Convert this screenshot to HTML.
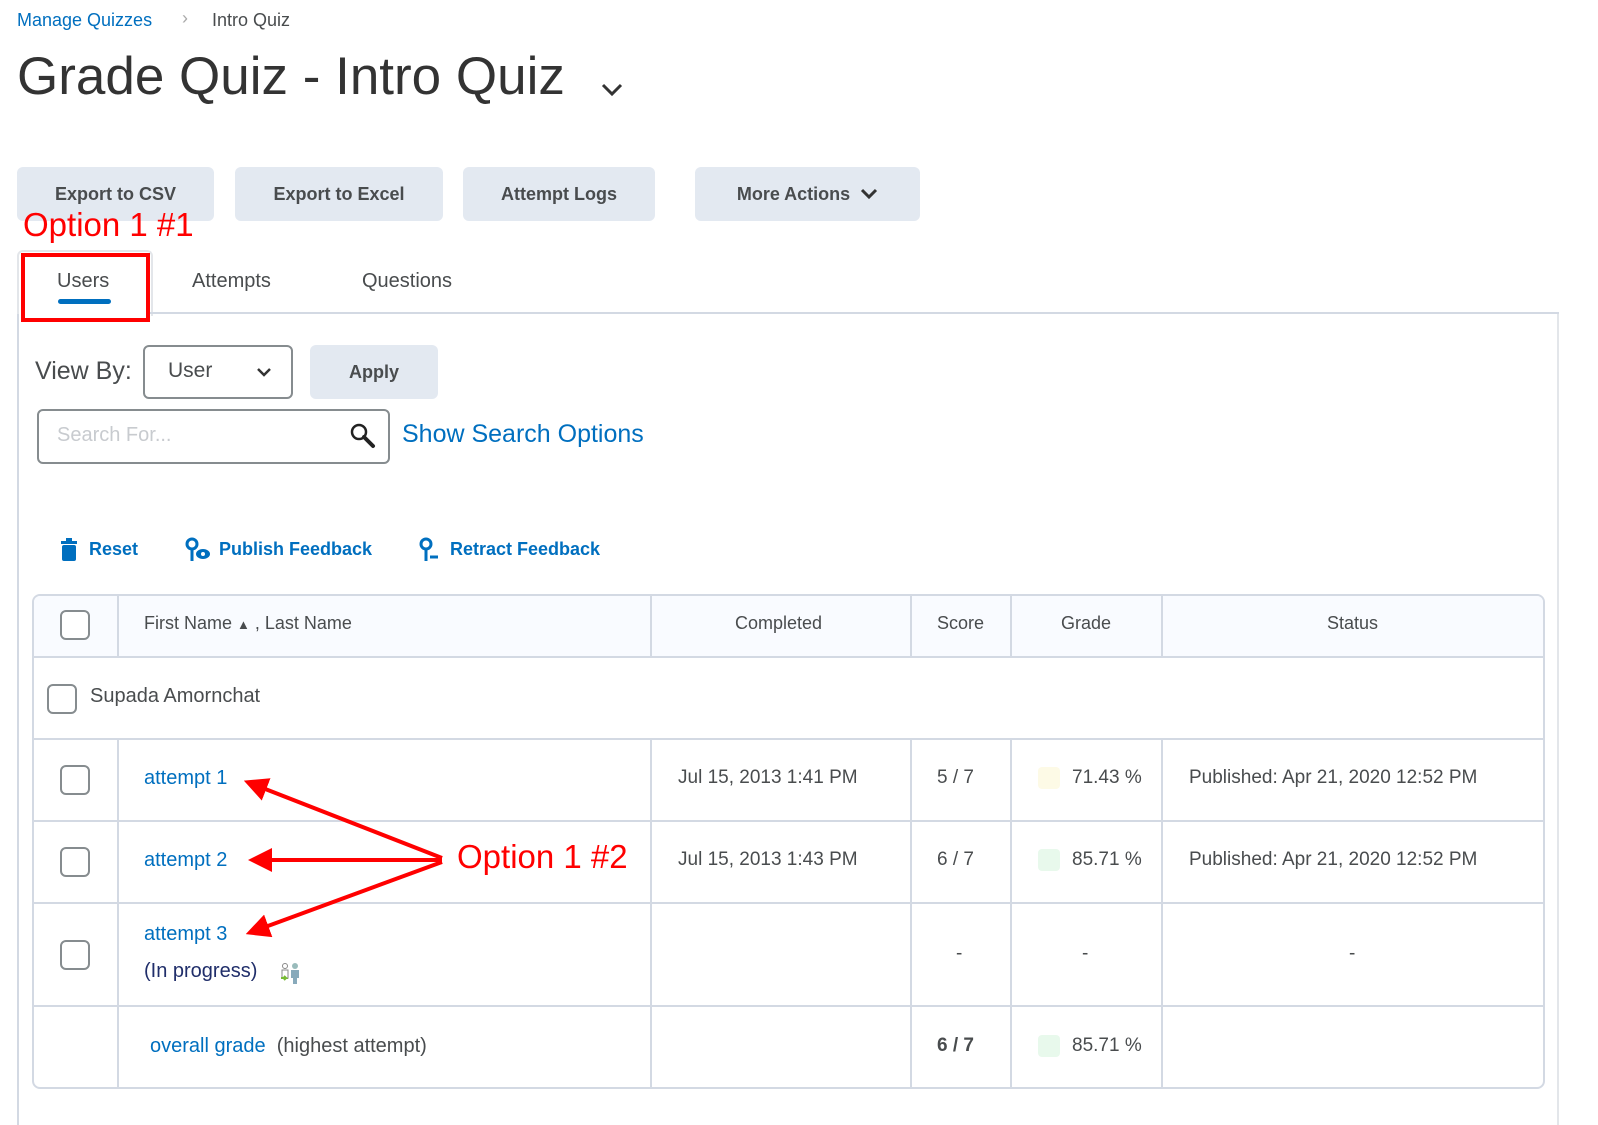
<!DOCTYPE html>
<html><head><meta charset="utf-8"><style>
body{margin:0;width:1598px;height:1125px;background:#fff;font-family:"Liberation Sans",sans-serif;color:#494c4e;position:relative;overflow:hidden}
.a{position:absolute;white-space:nowrap}
.btn{position:absolute;background:#e3e9f1;border-radius:6px;height:54px;top:167px;font-size:18px;font-weight:bold;color:#494c4e;display:flex;align-items:center;justify-content:center}
.link{color:#006fbf}
.hl{position:absolute;height:2px;background:#d3d9e3;left:32px;width:1513px}
.vl{position:absolute;width:2px;background:#d3d9e3}
.cb{position:absolute;width:30px;height:30px;border:2px solid #868c8f;border-radius:6px;box-sizing:border-box;background:#fff}
.t{position:absolute;font-size:19px;white-space:nowrap}
.sw{position:absolute;width:22px;height:22px;border-radius:4px}
</style></head><body>
<div class="a link" style="left:17px;top:10px;font-size:18px">Manage Quizzes</div>
<div class="a" style="left:182px;top:8px;font-size:18px;color:#aaa">›</div>
<div class="a" style="left:212px;top:10px;font-size:18px">Intro Quiz</div>
<div class="a" style="left:17px;top:46px;font-size:53px;color:#333">Grade Quiz - Intro Quiz</div>
<svg class="a" style="left:600px;top:82px" width="24" height="16"><path d="M3 3l9 9 9-9" fill="none" stroke="#333" stroke-width="3"/></svg>
<div class="btn" style="left:17px;width:197px">Export to CSV</div>
<div class="btn" style="left:235px;width:208px">Export to Excel</div>
<div class="btn" style="left:463px;width:192px">Attempt Logs</div>
<div class="btn" style="left:695px;width:225px">More Actions <svg style="margin-left:10px" width="18" height="12"><path d="M2 2l7 7 7-7" fill="none" stroke="#333" stroke-width="3"/></svg></div>
<div class="a" style="left:23px;top:206px;font-size:33px;color:#f00">Option 1 #1</div>
<div style="position:absolute;left:17px;top:250px;width:132px;height:64px;border:2px solid #e3e6ea;border-bottom:none;border-radius:6px 6px 0 0;background:#fff"></div>
<div style="position:absolute;left:148px;top:312px;width:1411px;height:2px;background:#d3d9e3"></div>
<div style="position:absolute;left:17px;top:314px;width:2px;height:811px;background:#d3d9e3"></div>
<div style="position:absolute;left:1557px;top:314px;width:2px;height:811px;background:#e3e6ea"></div>
<div style="position:absolute;left:21px;top:253px;width:121px;height:61px;border:4px solid #f00"></div>
<div class="a" style="left:57px;top:270px;font-size:20px">Users</div>
<div style="position:absolute;left:58px;top:299px;width:53px;height:5px;border-radius:3px;background:#006fbf"></div>
<div class="a" style="left:192px;top:270px;font-size:20px">Attempts</div>
<div class="a" style="left:362px;top:270px;font-size:20px">Questions</div>
<div class="a" style="left:35px;top:357px;font-size:25px">View By:</div>
<div style="position:absolute;left:143px;top:345px;width:150px;height:54px;border:2px solid #868c8f;border-radius:6px;box-sizing:border-box"></div>
<div class="a" style="left:168px;top:359px;font-size:21px">User</div>
<svg class="a" style="left:256px;top:367px" width="16" height="11"><path d="M2 2l6 6 6-6" fill="none" stroke="#333" stroke-width="2.5"/></svg>
<div class="btn" style="left:310px;top:345px;width:128px;height:54px">Apply</div>
<div style="position:absolute;left:37px;top:409px;width:353px;height:55px;border:2px solid #868c8f;border-radius:6px;box-sizing:border-box"></div>
<div class="a" style="left:57px;top:424px;font-size:20px;color:#c8cbcf">Search For...</div>
<svg class="a" style="left:349px;top:422px" width="28" height="28"><circle cx="10" cy="10" r="7" fill="none" stroke="#222" stroke-width="2.5"/><path d="M15 15l9 9" stroke="#222" stroke-width="4" stroke-linecap="round"/></svg>
<div class="a link" style="left:402px;top:420px;font-size:25px">Show Search Options</div>
<svg class="a" style="left:60px;top:537px" width="20" height="26"><rect x="1" y="4" width="16" height="3" fill="#006fbf"/><rect x="6" y="1" width="6" height="4" fill="#006fbf"/><rect x="2" y="8" width="14" height="16" rx="2" fill="#006fbf"/></svg>
<div class="a link" style="left:89px;top:539px;font-size:18px;font-weight:bold">Reset</div>
<svg class="a" style="left:185px;top:537px" width="28" height="26"><circle cx="7" cy="7" r="5" fill="none" stroke="#006fbf" stroke-width="3"/><path d="M7 12v12" stroke="#006fbf" stroke-width="3"/><ellipse cx="18" cy="17" rx="7" ry="5" fill="#006fbf"/><circle cx="18" cy="17" r="2" fill="#fff"/></svg>
<div class="a link" style="left:219px;top:539px;font-size:18px;font-weight:bold">Publish Feedback</div>
<svg class="a" style="left:418px;top:537px" width="24" height="26"><circle cx="8" cy="7" r="5" fill="none" stroke="#006fbf" stroke-width="3"/><path d="M8 12v12M12 20h8" stroke="#006fbf" stroke-width="3"/></svg>
<div class="a link" style="left:450px;top:539px;font-size:18px;font-weight:bold">Retract Feedback</div>
<div style="position:absolute;left:32px;top:594px;width:1513px;height:495px;border:2px solid #d3d9e3;border-radius:8px;box-sizing:border-box"></div>
<div style="position:absolute;left:34px;top:596px;width:1509px;height:61px;background:#f9fbff;border-radius:6px 6px 0 0"></div>
<div class="hl" style="top:656px"></div><div class="hl" style="top:738px"></div><div class="hl" style="top:820px"></div><div class="hl" style="top:902px"></div><div class="hl" style="top:1005px"></div>
<div class="vl" style="left:117px;top:594px;height:63px"></div><div class="vl" style="left:117px;top:739px;height:350px"></div>
<div class="vl" style="left:650px;top:594px;height:63px"></div><div class="vl" style="left:650px;top:739px;height:350px"></div>
<div class="vl" style="left:910px;top:594px;height:63px"></div><div class="vl" style="left:910px;top:739px;height:350px"></div>
<div class="vl" style="left:1010px;top:594px;height:63px"></div><div class="vl" style="left:1010px;top:739px;height:350px"></div>
<div class="vl" style="left:1161px;top:594px;height:63px"></div><div class="vl" style="left:1161px;top:739px;height:350px"></div>
<div class="cb" style="left:60px;top:610px"></div>
<div class="t" style="left:144px;top:613px;font-size:18px">First Name <span style="font-size:13px">▲</span> , Last Name</div>
<div class="t" style="left:735px;top:613px;font-size:18px">Completed</div>
<div class="t" style="left:937px;top:613px;font-size:18px">Score</div>
<div class="t" style="left:1061px;top:613px;font-size:18px">Grade</div>
<div class="t" style="left:1327px;top:613px;font-size:18px">Status</div>
<div class="cb" style="left:47px;top:684px"></div>
<div class="t" style="left:90px;top:685px;font-size:20px">Supada Amornchat</div>
<div class="cb" style="left:60px;top:765px"></div>
<div class="t link" style="left:144px;top:767px;font-size:20px">attempt 1</div>
<div class="t" style="left:678px;top:767px">Jul 15, 2013 1:41 PM</div>
<div class="t" style="left:937px;top:767px">5 / 7</div>
<div class="sw" style="left:1038px;top:767px;background:#fdfae6"></div>
<div class="t" style="left:1072px;top:767px">71.43 %</div>
<div class="t" style="left:1189px;top:767px">Published: Apr 21, 2020 12:52 PM</div>
<div class="cb" style="left:60px;top:847px"></div>
<div class="t link" style="left:144px;top:849px;font-size:20px">attempt 2</div>
<div class="t" style="left:678px;top:849px">Jul 15, 2013 1:43 PM</div>
<div class="t" style="left:937px;top:849px">6 / 7</div>
<div class="sw" style="left:1038px;top:849px;background:#e8f9ec"></div>
<div class="t" style="left:1072px;top:849px">85.71 %</div>
<div class="t" style="left:1189px;top:849px">Published: Apr 21, 2020 12:52 PM</div>
<div class="cb" style="left:60px;top:940px"></div>
<div class="t link" style="left:144px;top:923px;font-size:20px">attempt 3</div>
<div class="t" style="left:144px;top:960px;font-size:20px;color:#202e6a">(In progress)</div>
<svg class="a" style="left:279px;top:962px" width="24" height="22"><circle cx="6" cy="4" r="2.5" fill="none" stroke="#888"/><path d="M3 8h6v8H3z" fill="none" stroke="#888"/><circle cx="16" cy="4" r="3" fill="#9bb"/><path d="M12 8h8v8h-2v6h-4v-6h-2z" fill="#8ab"/><path d="M2 16h5l-2-2M7 16l-2 2" stroke="#7b3" stroke-width="2" fill="none"/></svg>
<div class="t" style="left:956px;top:943px">-</div>
<div class="t" style="left:1082px;top:943px">-</div>
<div class="t" style="left:1349px;top:943px">-</div>
<div class="t" style="left:150px;top:1035px;font-size:20px"><span class="link">overall grade</span>&nbsp; (highest attempt)</div>
<div class="t" style="left:937px;top:1035px;font-weight:bold">6 / 7</div>
<div class="sw" style="left:1038px;top:1035px;background:#e8f9ec"></div>
<div class="t" style="left:1072px;top:1035px">85.71 %</div>
<svg class="a" style="left:0;top:0" width="1598" height="1125">
<defs><marker id="m" markerWidth="6" markerHeight="6" refX="3" refY="3" orient="auto"><path d="M0 0L6 3L0 6z" fill="#f00"/></marker></defs>
<g stroke="#f00" stroke-width="4" fill="none">
<path d="M442 858L255 785" marker-end="url(#m)"/>
<path d="M442 860L260 860" marker-end="url(#m)"/>
<path d="M442 862L257 930" marker-end="url(#m)"/>
</g></svg>
<div class="a" style="left:457px;top:838px;font-size:33px;color:#f00">Option 1 #2</div>
</body></html>
